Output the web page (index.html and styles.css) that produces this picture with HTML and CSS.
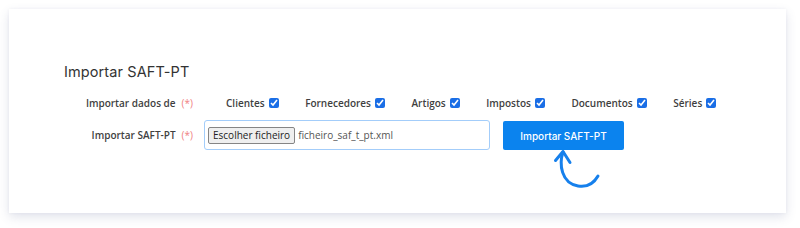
FILE: index.html
```html
<!DOCTYPE html>
<html lang="pt">
<head>
<meta charset="utf-8">
<title>Importar SAFT-PT</title>
<link rel="stylesheet" href="styles.css">
</head>
<body>
<div class="card">
  <h2 class="title">Importar SAFT-PT</h2>
  <div class="row row-checks">
    <div class="label">Importar dados de<span class="req">(*)</span></div>
    <div class="checks">
      <label class="check">Clientes<input type="checkbox" checked></label>
      <label class="check">Fornecedores<input type="checkbox" checked></label>
      <label class="check">Artigos<input type="checkbox" checked></label>
      <label class="check">Impostos<input type="checkbox" checked></label>
      <label class="check">Documentos<input type="checkbox" checked></label>
      <label class="check">Séries<input type="checkbox" checked></label>
    </div>
  </div>
  <div class="row row-file">
    <div class="label">Importar SAFT-PT<span class="req">(*)</span></div>
    <div class="file">
      <span class="file-btn">Escolher ficheiro</span>
      <span class="file-name">ficheiro_saf_t_pt.xml</span>
    </div>
    <div class="action">
      <button class="btn" type="button">Importar SAFT-PT</button>
      <svg class="arrow" width="52" height="42" viewBox="0 0 52 42" fill="none" stroke="#1680ec" stroke-width="3" stroke-linecap="round" stroke-linejoin="round">
        <path d="M13,4 C9,16 11,35 28,38 C37,39.5 44,35 48,28"/>
        <path d="M5.5,12.5 L13,3.5 L20,14.5"/>
      </svg>
    </div>
  </div>
</div>
</body>
</html>
```
FILE: styles.css
```css
* { box-sizing: border-box; }
html, body { margin: 0; padding: 0; background: #ffffff; }
body { width: 800px; height: 228px; overflow: hidden; font-family: "Open Sans", "Liberation Sans", sans-serif; }

.card {
  margin: 9px 0 0 9px;
  width: 777px;
  height: 204px;
  background: #fff;
  box-shadow: 0 4px 10px rgba(70, 80, 130, 0.16), 0 0 3px rgba(70, 80, 130, 0.06);
  padding: 52px 0 0 55px;
}

.title {
  margin: 0;
  font-family: Inter, "Noto Sans", sans-serif;
  font-weight: 400;
  font-size: 14.5px;
  line-height: 22px;
  color: #333;
  letter-spacing: 0.1px;
}

.row { display: flex; align-items: center; }
.row-checks { margin-top: 10px; height: 20px; }
.row-file { margin-top: 7px; align-items: flex-start; }

.label {
  width: 129px;
  text-align: right;
  font-size: 10px;
  font-weight: 600;
  color: #3f3f3f;
  line-height: 20px;
  white-space: nowrap;
}
.row-file .label { line-height: 30px; }

.req { color: #f0807f; font-weight: 400; margin-left: 6px; }

.checks { display: flex; gap: 26.5px; margin-left: 33px; }
.check {
  display: flex;
  align-items: center;
  font-size: 10px;
  font-weight: 600;
  color: #3f3f3f;
  line-height: 20px;
  white-space: nowrap;
}
.check input {
  width: 10px;
  height: 10px;
  margin: 0 0 0 4px;
  accent-color: #1a6ee6;
}

.file {
  margin-left: 11px;
  width: 286px;
  height: 30px;
  border: 1px solid #a3cdfa;
  border-radius: 3px;
  display: flex;
  align-items: center;
  padding-left: 3px;
}
.file-btn {
  height: 17px;
  padding: 0 4px;
  background: #efefef;
  border: 1px solid #858585;
  border-radius: 2px;
  font-size: 10px;
  line-height: 15px;
  color: #222;
  white-space: nowrap;
}
.file-name {
  margin-left: 3px;
  font-size: 10px;
  color: #555;
  white-space: nowrap;
}

.action { margin-left: 13px; margin-top: 1px; display: flex; flex-direction: column; }
.btn {
  width: 121px;
  height: 29px;
  background: #0b83ee;
  border: none;
  border-radius: 2px;
  color: #fff;
  font-family: Inter, "Noto Sans", sans-serif;
  font-weight: 500;
  font-size: 10px;
  padding: 0;
}
.arrow { margin-left: 47px; margin-top: -2px; display: block; }
```
